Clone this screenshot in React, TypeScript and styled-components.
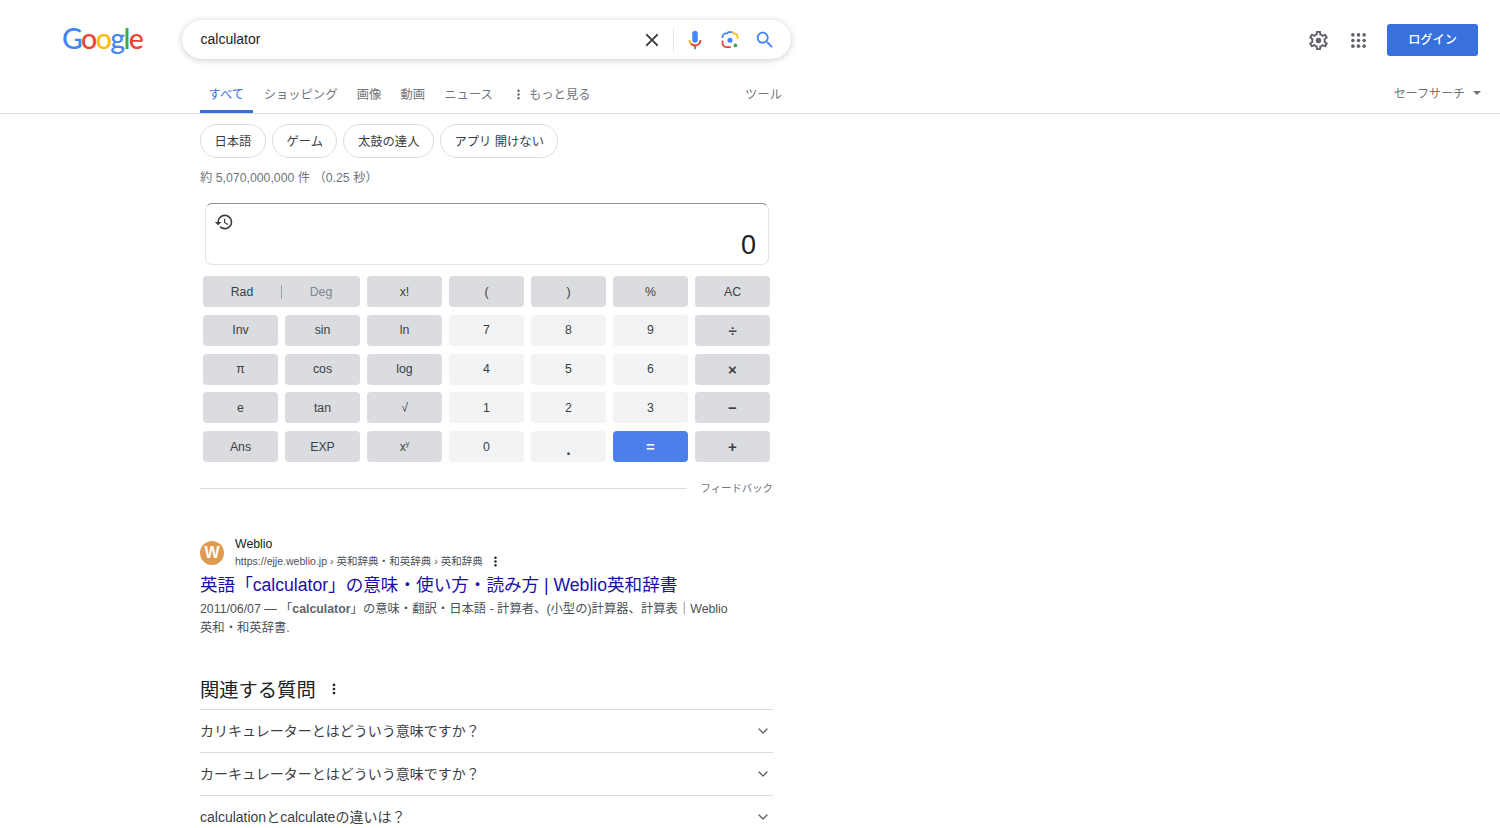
import React from "react";
import styled, { createGlobalStyle } from "styled-components";
import { ChevronDown, EllipsisVertical } from "lucide-react";

const Global = createGlobalStyle`
  html, body { margin: 0; padding: 0; height: 828px; overflow: hidden; background: #fff; }
  body { font-family: "Liberation Sans", "Noto Sans CJK JP", sans-serif; color: #202124; }
`;

const Header = styled.header`
  height: 113px;
  border-bottom: 1px solid #dadce0;
  display: flex;
  flex-direction: column;
`;
const TopBar = styled.div`
  height: 78px;
  padding: 20px 22px 0 62px;
  box-sizing: border-box;
  display: flex;
  align-items: flex-start;
`;
const Logo = styled.div`
  width: 120px;
  height: 40px;
  font-family: "Lato", sans-serif;
  font-size: 28.5px;
  line-height: 37px;
  letter-spacing: -1.6px;
  font-weight: 500;
`;
const LogoLetter = styled.span<{ $c: string }>`
  color: ${(p) => p.$c};
`;
const SearchBox = styled.div`
  width: 609px;
  height: 39px;
  border-radius: 20px;
  background: #fff;
  box-shadow: 0 1px 6px rgba(32, 33, 36, 0.24);
  display: flex;
  align-items: center;
  padding: 0 15px 0 18.5px;
  box-sizing: border-box;
`;
const SearchText = styled.div`
  flex: 1;
  font-size: 14px;
  padding-bottom: 2px;
  color: #202124;
`;
const IconSlot = styled.span<{ $w: number }>`
  width: ${(p) => p.$w}px;
  display: flex;
  justify-content: center;
  align-items: center;
`;
const Divider = styled.span`
  width: 1px;
  height: 24px;
  background: #dfe1e5;
  margin: 0 10px 0 9px;
`;
const RightActions = styled.div`
  margin-left: auto;
  height: 40px;
  display: flex;
  align-items: center;
`;
const ActionIcon = styled.span`
  width: 40px;
  display: flex;
  justify-content: center;
  align-items: center;
`;
const LoginButton = styled.button`
  width: 91px;
  height: 32px;
  margin-left: 9px;
  border: 0;
  border-radius: 3px;
  background: #3871dc;
  color: #fff;
  padding: 0 0 2px;
  font: 500 12.2px "Liberation Sans", "Noto Sans CJK JP", sans-serif;
`;
const TabRow = styled.nav`
  flex: 1;
  display: flex;
  padding-left: 200px;
  padding-right: 18px;
`;
const Tabs = styled.div`
  width: 582px;
  display: flex;
  align-items: stretch;
`;
const Tab = styled.div<{ $active?: boolean }>`
  padding: 0 ${(p) => (p.$active ? 8.5 : 9.6)}px;
  margin-right: ${(p) => (p.$active ? 1.5 : 0)}px;
  display: flex;
  align-items: center;
  gap: 4px;
  font-size: 12.3px;
  color: ${(p) => (p.$active ? "#3871dc" : "#70757a")};
  border-bottom: 3px solid ${(p) => (p.$active ? "#3871dc" : "transparent")};
  white-space: nowrap;
`;
const ToolsTab = styled(Tab)`
  margin-left: auto;
  padding: 0;
`;
const SafeSearch = styled.div`
  margin-left: auto;
  display: flex;
  align-items: center;
  gap: 8px;
  height: 29px;
  font-size: 12px;
  color: #70757a;
`;
const Caret = styled.span`
  width: 0;
  height: 0;
  margin-right: 1px;
  border-left: 4px solid transparent;
  border-right: 4px solid transparent;
  border-top: 4px solid #70757a;
`;

const Main = styled.main`
  width: 573px;
  margin-left: 200px;
`;
const Chips = styled.div`
  display: flex;
  gap: 6px;
  padding-top: 10px;
`;
const Chip = styled.div`
  height: 34px;
  box-sizing: border-box;
  border: 1px solid #dadce0;
  border-radius: 17px;
  padding: 0 13.5px;
  display: flex;
  align-items: center;
  font-size: 12.3px;
  color: #3c4043;
  white-space: nowrap;
`;
const Stats = styled.div`
  margin-top: 12px;
  height: 16px;
  line-height: 16px;
  font-size: 12.3px;
  color: #70757a;
`;
const Display = styled.div`
  margin: 17px 0 0 5px;
  width: 564px;
  height: 62px;
  box-sizing: border-box;
  border: 1px solid #e3e5e8;
  border-top-color: #8f9296;
  border-radius: 7px;
  padding: 8px 12px 0 8px;
  display: flex;
  justify-content: space-between;
`;
const HistoryButton = styled.span`
  display: flex;
  height: 20px;
`;
const Result = styled.div`
  align-self: flex-end;
  margin-bottom: 3px;
  font-size: 27px;
  line-height: 31px;
  color: #202124;
`;
const Keys = styled.div`
  margin: 11px 0 0 3px;
  display: grid;
  grid-template-columns: repeat(7, 75px);
  grid-auto-rows: 31px;
  column-gap: 7px;
  row-gap: 7.75px;
`;
const Key = styled.div<{ $kind?: "fn" | "num" | "eq" | "op"; $span?: number }>`
  grid-column: span ${(p) => p.$span ?? 1};
  border-radius: 4px;
  display: flex;
  align-items: center;
  justify-content: center;
  font-size: ${(p) => (p.$kind === "op" || p.$kind === "eq" ? 15 : 12.3)}px;
  color: ${(p) => (p.$kind === "eq" ? "#fff" : "#3c4043")};
  background: ${(p) =>
    p.$kind === "eq" ? "#4d7fea" : p.$kind === "num" ? "#f1f3f4" : "#dadce0"};
  font-weight: ${(p) => (p.$kind === "eq" || p.$kind === "op" ? 700 : 400)};
`;
const Half = styled.span<{ $muted?: boolean }>`
  flex: 1;
  text-align: center;
  color: ${(p) => (p.$muted ? "#80868b" : "#3c4043")};
`;
const HalfBar = styled.span`
  width: 1px;
  height: 14px;
  background: #9aa0a6;
`;
const Dot = styled.span`
  font-size: 16px;
  font-weight: 700;
  padding-top: 7px;
`;
const Sup = styled.sup`
  font-size: 7px;
  line-height: 0;
`;
const FeedbackRow = styled.div`
  margin-top: 17px;
  height: 18px;
  display: flex;
  align-items: center;
`;
const FeedbackRule = styled.span`
  flex: 1;
  height: 1px;
  background: #dadce0;
`;
const FeedbackText = styled.span`
  margin-left: 13px;
  padding-bottom: 2px;
  font-size: 10.4px;
  color: #70757a;
`;
const ResultBlock = styled.section`
  margin-top: 38px;
`;
const SourceRow = styled.div`
  display: flex;
  align-items: center;
  gap: 11px;
  height: 35px;
`;
const Favicon = styled.div`
  width: 24px;
  height: 24px;
  border-radius: 50%;
  background: #df9a4e;
  color: #fff;
  font-weight: 700;
  font-size: 16px;
  display: flex;
  align-items: center;
  justify-content: center;
`;
const SourceText = styled.div`
  display: flex;
  flex-direction: column;
`;
const SourceName = styled.div`
  font-size: 12.3px;
  line-height: 17px;
  color: #202124;
`;
const SourceUrl = styled.div`
  font-size: 10.55px;
  line-height: 17px;
  color: #4d5156;
  display: flex;
  align-items: center;
  gap: 6px;
`;
const ResultTitle = styled.a`
  display: block;
  margin-top: 3px;
  font-size: 17.6px;
  line-height: 24px;
  color: #1a0dab;
`;
const Snippet = styled.p`
  margin: 3px 0 0;
  width: 535px;
  font-size: 12.33px;
  line-height: 19px;
  color: #4d5156;
  text-spacing-trim: space-all;
`;
const Strong = styled.b`
  color: #5f6368;
`;
const QuestionHead = styled.h2`
  margin: 31px 0 0;
  height: 40px;
  display: flex;
  align-items: center;
  gap: 11px;
  font-size: 19.3px;
  font-weight: 400;
  color: #202124;
`;
const Question = styled.div`
  height: 43px;
  box-sizing: border-box;
  border-top: 1px solid #dadce0;
  padding-bottom: 3px;
  display: flex;
  align-items: center;
  justify-content: space-between;
  padding-right: 2px;
  font-size: 14px;
  color: #3c4043;
`;
const QuestionChevron = styled(ChevronDown)`
  margin-top: 3px;
`;

const Close = () => (
  <svg width="22" height="22" viewBox="0 0 24 24" fill="#3c4043">
    <path d="M19 6.41L17.59 5 12 10.59 6.41 5 5 6.41 10.59 12 5 17.59 6.41 19 12 13.41 17.59 19 19 17.59 13.41 12z" />
  </svg>
);
const Mic = () => (
  <svg width="24" height="24" viewBox="0 0 24 24">
    <path fill="#4285f4" d="m12 15c1.66 0 3-1.31 3-2.97v-7.02c0-1.66-1.34-3.01-3-3.01s-3 1.34-3 3.01v7.02c0 1.66 1.34 2.97 3 2.97z" />
    <path fill="#34a853" d="m11 18.08h2v3.92h-2z" />
    <path fill="#f4b400" d="m7.05 16.87c-1.27-1.33-2.05-2.83-2.05-4.87h2c0 1.45 0.56 2.42 1.47 3.38v0.32l-1.15 1.18z" />
    <path fill="#ea4335" d="m12 16.93a4.97 5.25 0 0 1 -3.54 -1.55l-1.41 1.49c1.26 1.34 3.02 2.13 4.95 2.13 3.87 0 6.99-2.92 6.99-6.99h-1.99c0 2.92-2.24 4.92-5 4.92z" />
  </svg>
);
const Lens = () => (
  <svg width="20" height="20" viewBox="0 0 24 24" fill="none" strokeWidth="2.1" strokeLinecap="butt">
    <path stroke="#4285f4" d="M3 9.5V8.5A4.5 4.5 0 0 1 7.5 4L9 4L10 2.5H15" />
    <path stroke="#fbbc04" d="M15 2.5L16 4H16.5A4.5 4.5 0 0 1 21 8.5V10.5" />
    <path stroke="#ea4335" d="M3 12.5V16A4.5 4.5 0 0 0 7.5 20.5H13" />
    <circle cx="12" cy="12.3" r="3" fill="#4285f4" />
    <circle cx="18.5" cy="18.5" r="2.2" fill="#34a853" />
  </svg>
);
const SearchGlyph = () => (
  <svg width="24" height="24" viewBox="0 0 24 24" fill="#4285f4">
    <path d="M15.5 14h-.79l-.28-.27C15.41 12.59 16 11.11 16 9.5 16 5.91 13.09 3 9.5 3S3 5.91 3 9.5 5.91 16 9.5 16c1.61 0 3.09-.59 4.23-1.57l.27.28v.79l5 4.99L20.49 19l-4.99-5zm-6 0C7.01 14 5 11.99 5 9.5S7.01 5 9.5 5 14 7.01 14 9.5 11.99 14 9.5 14z" />
  </svg>
);
const Gear = () => (
  <svg width="23" height="23" viewBox="0 0 24 24" fill="#5f6368">
    <path d="M19.43 12.98c.04-.32.07-.64.07-.98 0-.34-.03-.66-.07-.98l2.11-1.65c.19-.15.24-.42.12-.64l-2-3.46c-.09-.16-.26-.25-.44-.25-.06 0-.12.01-.17.03l-2.49 1c-.52-.4-1.08-.73-1.69-.98l-.38-2.65C14.46 2.18 14.25 2 14 2h-4c-.25 0-.46.18-.49.42l-.38 2.65c-.61.25-1.17.59-1.69.98l-2.49-1c-.06-.02-.12-.03-.18-.03-.17 0-.34.09-.43.25l-2 3.46c-.13.22-.07.49.12.64l2.11 1.65c-.04.32-.07.65-.07.98 0 .33.03.66.07.98l-2.11 1.65c-.19.15-.24.42-.12.64l2 3.46c.09.16.26.25.44.25.06 0 .12-.01.17-.03l2.49-1c.52.4 1.08.73 1.69.98l.38 2.65c.03.24.24.42.49.42h4c.25 0 .46-.18.49-.42l.38-2.65c.61-.25 1.17-.59 1.69-.98l2.49 1c.06.02.12.03.18.03.17 0 .34-.09.43-.25l2-3.46c.12-.22.07-.49-.12-.64l-2.11-1.65zm-1.98-1.71c.04.31.05.52.05.73 0 .21-.02.43-.05.73l-.14 1.13.89.7 1.08.84-.7 1.21-1.27-.51-1.04-.42-.9.68c-.43.32-.84.56-1.25.73l-1.06.43-.16 1.13-.2 1.35h-1.4l-.19-1.35-.16-1.13-1.06-.43c-.43-.18-.83-.41-1.23-.71l-.91-.7-1.06.43-1.27.51-.7-1.21 1.08-.84.89-.7-.14-1.13c-.03-.31-.05-.54-.05-.74s.02-.43.05-.73l.14-1.13-.89-.7-1.08-.84.7-1.21 1.27.51 1.04.42.9-.68c.43-.32.84-.56 1.25-.73l1.06-.43.16-1.13.2-1.35h1.39l.19 1.35.16 1.13 1.06.43c.43.18.83.41 1.23.71l.91.7 1.06-.43 1.27-.51.7 1.21-1.07.85-.89.7.14 1.13z" />
    <circle cx="12" cy="12" r="2.8" />
  </svg>
);
const Apps = () => (
  <svg width="15" height="15" viewBox="0 0 16 16" fill="#5f6368">
    {[2, 8, 14].flatMap((y) =>
      [2, 8, 14].map((x) => <circle key={`${x}-${y}`} cx={x} cy={y} r="1.9" />)
    )}
  </svg>
);
const History = () => (
  <svg width="20" height="20" viewBox="0 0 24 24" fill="#3c4043">
    <path d="M13 3a9 9 0 0 0-9 9H1l3.89 3.89.07.14L9 12H6c0-3.87 3.13-7 7-7s7 3.13 7 7-3.13 7-7 7c-1.93 0-3.68-.79-4.94-2.06l-1.42 1.42A8.954 8.954 0 0 0 13 21a9 9 0 0 0 0-18zm-1 5v5l4.28 2.54.72-1.21-3.5-2.08V8H12z" />
  </svg>
);

type K = { t: React.ReactNode; kind?: "fn" | "num" | "eq" | "op" };
const keys: K[] = [
  { t: "x!" }, { t: "(" }, { t: ")" }, { t: "%" }, { t: "AC" },
  { t: "Inv" }, { t: "sin" }, { t: "ln" }, { t: "7", kind: "num" }, { t: "8", kind: "num" }, { t: "9", kind: "num" }, { t: "÷", kind: "op" },
  { t: "π" }, { t: "cos" }, { t: "log" }, { t: "4", kind: "num" }, { t: "5", kind: "num" }, { t: "6", kind: "num" }, { t: "×", kind: "op" },
  { t: "e" }, { t: "tan" }, { t: "√" }, { t: "1", kind: "num" }, { t: "2", kind: "num" }, { t: "3", kind: "num" }, { t: "−", kind: "op" },
  { t: "Ans" }, { t: "EXP" }, { t: <span>x<Sup>y</Sup></span> }, { t: "0", kind: "num" }, { t: <Dot>.</Dot>, kind: "num" }, { t: "=", kind: "eq" }, { t: "+", kind: "op" },
];

const questions = [
  "カリキュレーターとはどういう意味ですか？",
  "カーキュレーターとはどういう意味ですか？",
  "calculationとcalculateの違いは？",
];

const logo: [string, string][] = [
  ["G", "#4285f4"], ["o", "#ea4335"], ["o", "#fbbc05"], ["g", "#4285f4"], ["l", "#34a853"], ["e", "#ea4335"],
];

export default function App() {
  return (
    <>
      <Global />
      <Header>
        <TopBar>
          <Logo>
            {logo.map(([l, c], i) => (
              <LogoLetter key={i} $c={c}>{l}</LogoLetter>
            ))}
          </Logo>
          <SearchBox>
            <SearchText>calculator</SearchText>
            <IconSlot $w={24}><Close /></IconSlot>
            <Divider />
            <IconSlot $w={22}><Mic /></IconSlot>
            <IconSlot $w={48}><Lens /></IconSlot>
            <IconSlot $w={22}><SearchGlyph /></IconSlot>
          </SearchBox>
          <RightActions>
            <ActionIcon><Gear /></ActionIcon>
            <ActionIcon><Apps /></ActionIcon>
            <LoginButton>ログイン</LoginButton>
          </RightActions>
        </TopBar>
        <TabRow>
          <Tabs>
            <Tab $active>すべて</Tab>
            <Tab>ショッピング</Tab>
            <Tab>画像</Tab>
            <Tab>動画</Tab>
            <Tab>ニュース</Tab>
            <Tab>
              <EllipsisVertical size={13} color="#5f6368" strokeWidth={2.4} />
              もっと見る
            </Tab>
            <ToolsTab>ツール</ToolsTab>
          </Tabs>
          <SafeSearch>
            セーフサーチ
            <Caret />
          </SafeSearch>
        </TabRow>
      </Header>
      <Main>
        <Chips>
          <Chip>日本語</Chip>
          <Chip>ゲーム</Chip>
          <Chip>太鼓の達人</Chip>
          <Chip>アプリ 開けない</Chip>
        </Chips>
        <Stats>約 5,070,000,000 件 （0.25 秒）</Stats>
        <Display>
          <HistoryButton><History /></HistoryButton>
          <Result>0</Result>
        </Display>
        <Keys>
          <Key $span={2}>
            <Half>Rad</Half>
            <HalfBar />
            <Half $muted>Deg</Half>
          </Key>
          {keys.map((k, i) => (
            <Key key={i} $kind={k.kind}>{k.t}</Key>
          ))}
        </Keys>
        <FeedbackRow>
          <FeedbackRule />
          <FeedbackText>フィードバック</FeedbackText>
        </FeedbackRow>
        <ResultBlock>
          <SourceRow>
            <Favicon>W</Favicon>
            <SourceText>
              <SourceName>Weblio</SourceName>
              <SourceUrl>
                https://ejje.weblio.jp › 英和辞典・和英辞典 › 英和辞典
                <EllipsisVertical size={13} color="#202124" strokeWidth={2.6} />
              </SourceUrl>
            </SourceText>
          </SourceRow>
          <ResultTitle>英語「calculator」の意味・使い方・読み方 | Weblio英和辞書</ResultTitle>
          <Snippet>
            2011/06/07 — 「<Strong>calculator</Strong>」の意味・翻訳・日本語 - 計算者、(小型の)計算器、計算表｜Weblio英和・和英辞書.
          </Snippet>
        </ResultBlock>
        <QuestionHead>
          関連する質問
          <EllipsisVertical size={14} color="#202124" strokeWidth={2.6} />
        </QuestionHead>
        {questions.map((q) => (
          <Question key={q}>
            {q}
            <QuestionChevron size={16} color="#5f6368" />
          </Question>
        ))}
      </Main>
    </>
  );
}
